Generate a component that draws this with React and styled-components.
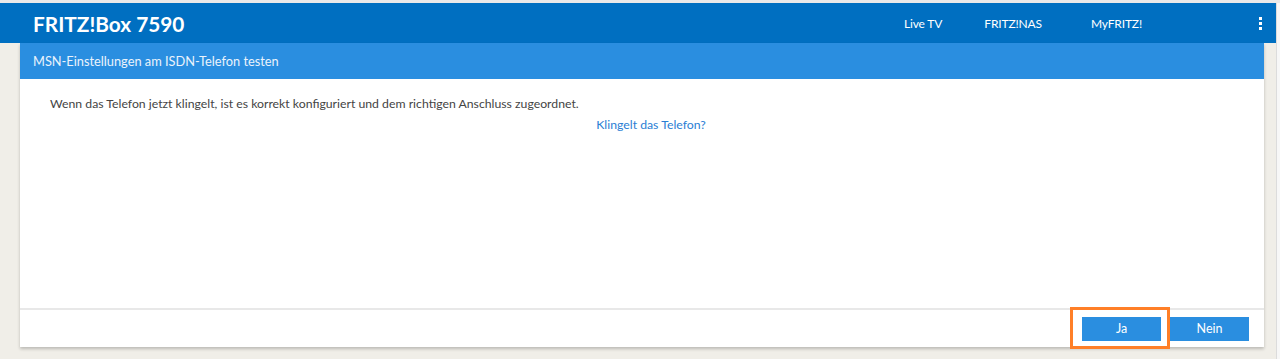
import React from "react";
import styled, { createGlobalStyle } from "styled-components";

const GlobalStyle = createGlobalStyle`
  html, body {
    margin: 0;
    padding: 0;
    background: #f0eee8;
    font-family: Lato, "Open Sans", sans-serif;
  }
  * { box-sizing: border-box; }
`;

const Page = styled.div`
  width: 1280px;
  height: 359px;
  background: #f0eee8;
  border-top: 3px solid #e9e9e9;
  padding-right: 4px;
  overflow: hidden;
  position: relative;
`;

const ScrollEdge = styled.div`
  position: absolute;
  top: 0;
  right: 0;
  width: 4px;
  height: 100%;
  background: #f7f7f7;
  border-left: 1px solid #dcdcdc;
`;

const TopBar = styled.header`
  height: 40px;
  background: #006fc1;
  display: flex;
  align-items: center;
  padding: 0 14px 0 33px;
`;

const Brand = styled.div`
  color: #fff;
  font-weight: 700;
  font-size: 20.8px;
  flex: 1;
`;

const Nav = styled.nav`
  display: flex;
  align-items: center;
`;

const NavItem = styled.span`
  color: #fff;
  font-size: 12px;
  letter-spacing: -0.15px;
  margin-left: ${(p) => p.gap}px;
`;

const Kebab = styled.span`
  margin-left: 117px;
  display: flex;
  flex-direction: column;
  gap: 2px;
  & > i {
    display: block;
    width: 3px;
    height: 3px;
    background: #fff;
  }
`;

const Panel = styled.main`
  margin: 0 12px 0 20px;
  background: #fff;
  box-shadow: 0 2px 3px rgba(0, 0, 0, 0.22);
`;

const SubHeader = styled.div`
  height: 36px;
  background: #2a8ee0;
  color: #eaf3fc;
  font-size: 12.8px;
  display: flex;
  align-items: center;
  padding-left: 13px;
`;

const Body = styled.section`
  height: 231px;
  padding: 17px 30px 0;
  color: #444;
  font-size: 12.25px;
  border-bottom: 2px solid #e8e8e8;
`;

const Text = styled.p`
  margin: 0;
`;

const Question = styled.p`
  margin: 6px 0 0;
  padding-left: 18px;
  text-align: center;
  color: #2a7ed4;
`;

const Footer = styled.div`
  height: 37px;
  display: flex;
  justify-content: flex-end;
  align-items: center;
  padding-right: 15px;
  gap: 9px;
`;

const Highlight = styled.div`
  position: relative;
`;

const Marker = styled.div`
  position: absolute;
  left: -12px;
  top: -10px;
  right: -9px;
  bottom: -8px;
  border: 3px solid #ff7f27;
`;

const Button = styled.button`
  width: 79px;
  height: 24px;
  border: none;
  border-radius: 0;
  background: #2a8ee0;
  color: #fff;
  font-family: inherit;
  font-size: 12.5px;
  padding: 0;
`;

export default function App() {
  return (
    <>
      <GlobalStyle />
      <Page>
        <TopBar>
          <Brand>FRITZ!Box 7590</Brand>
          <Nav>
            <NavItem gap={0}>Live TV</NavItem>
            <NavItem gap={42}>FRITZ!NAS</NavItem>
            <NavItem gap={49}>MyFRITZ!</NavItem>
            <Kebab>
              <i />
              <i />
              <i />
            </Kebab>
          </Nav>
        </TopBar>
        <Panel>
          <SubHeader>MSN-Einstellungen am ISDN-Telefon testen</SubHeader>
          <Body>
            <Text>
              Wenn das Telefon jetzt klingelt, ist es korrekt konfiguriert und dem richtigen Anschluss zugeordnet.
            </Text>
            <Question>Klingelt das Telefon?</Question>
          </Body>
          <Footer>
            <Highlight>
              <Marker />
              <Button>Ja</Button>
            </Highlight>
            <Button>Nein</Button>
          </Footer>
        </Panel>
        <ScrollEdge />
      </Page>
    </>
  );
}
